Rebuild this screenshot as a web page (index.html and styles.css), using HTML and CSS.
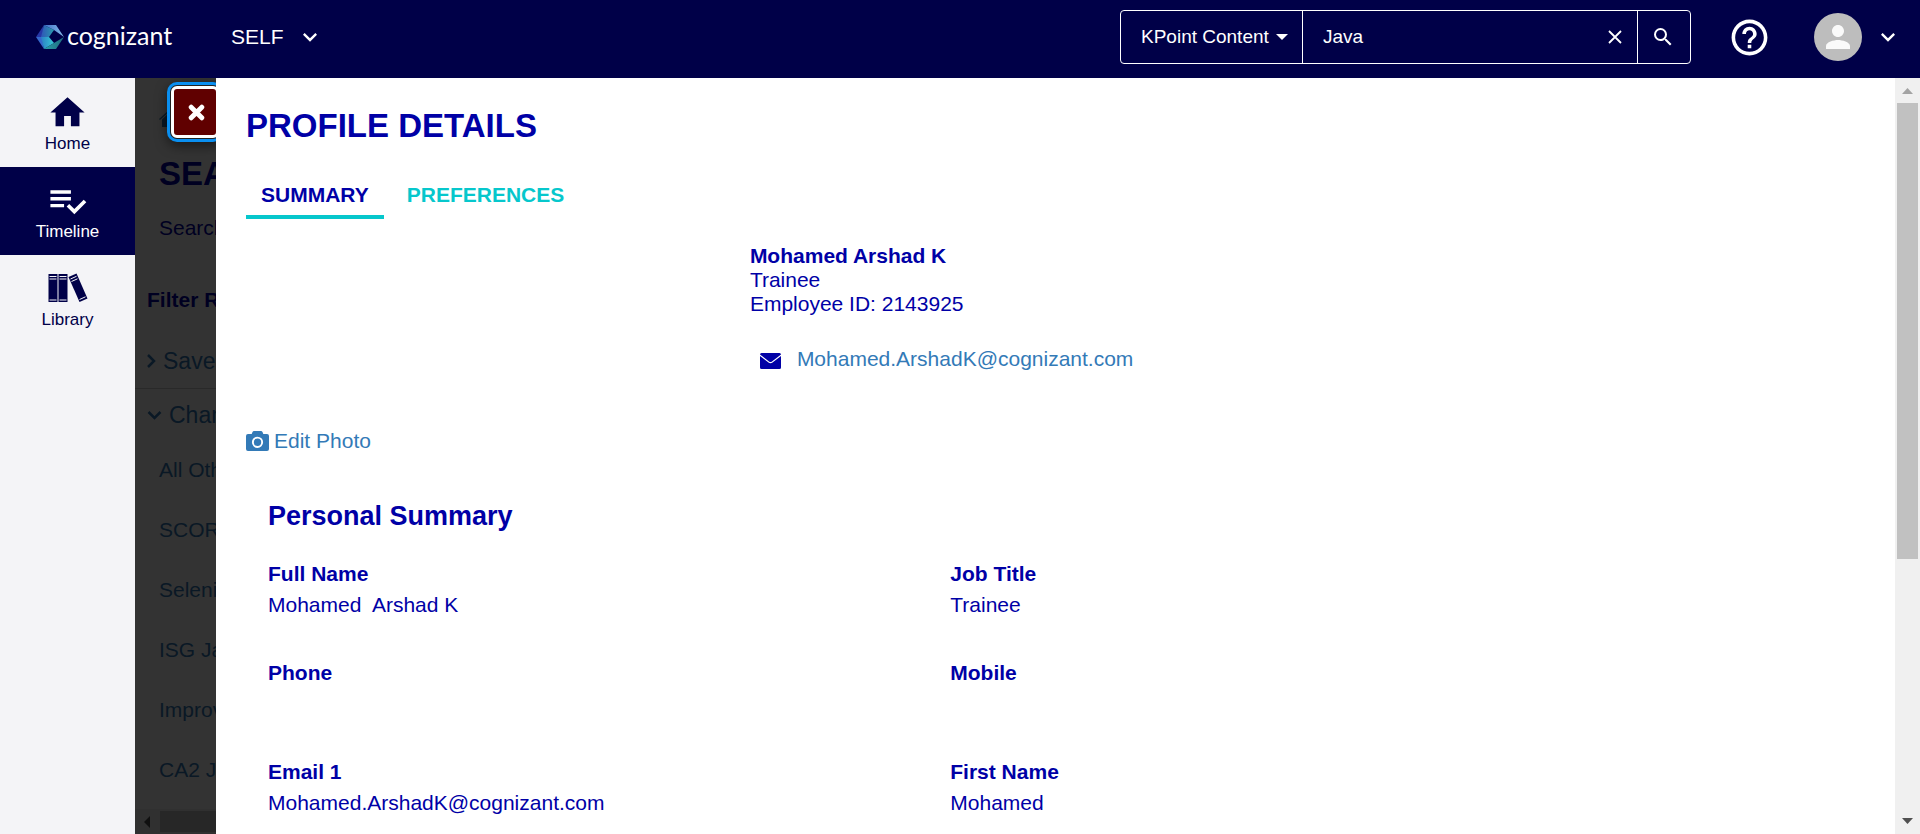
FILE: index.html
```html
<!DOCTYPE html>
<html lang="en">
<head>
<meta charset="utf-8">
<title>Profile Details</title>
<link rel="stylesheet" href="styles.css">
</head>
<body>
<div class="app">
  <header class="topbar">
    <a class="brand" href="#">
      <svg class="brand-mark" viewBox="0 0 28 24" aria-hidden="true">
        <defs>
          <linearGradient id="g1" x1="0" x2="1"><stop offset="0" stop-color="#3f6fc8"/><stop offset="1" stop-color="#85bbea"/></linearGradient>
          <linearGradient id="g2" x1="0" x2="1"><stop offset="0" stop-color="#2b7fc6"/><stop offset="1" stop-color="#38cbd4"/></linearGradient>
          <linearGradient id="g3" x1="0" x2="1"><stop offset="0" stop-color="#2f55b8"/><stop offset="1" stop-color="#2a9aae"/></linearGradient>
          <linearGradient id="g4" x1="0" x2="1"><stop offset="0" stop-color="#2aa0a8"/><stop offset="1" stop-color="#1f6a80"/></linearGradient>
        </defs>
        <path fill="url(#g1)" d="M8 0h12l8 12-10-7z"/>
        <path fill="#2636a6" d="M8 0 0 12h6z"/>
        <path fill="url(#g3)" d="M8 0l10 5-5 7H5z"/>
        <path fill="#3568cc" d="M0 12h6l2 12z"/>
        <path fill="url(#g2)" d="M5 12h8l5 6-10 6z"/>
        <path fill="url(#g4)" d="M28 12l-8 12H8l10-6z"/>
      </svg>
      <span class="brand-name">cognizant</span>
    </a>
    <button class="role" type="button">SELF
      <svg class="chev" viewBox="0 0 24 24" aria-hidden="true"><path fill="currentColor" d="M16.59 8.59 12 13.17 7.41 8.59 6 10l6 6 6-6z"/></svg>
    </button>
    <form class="search">
      <label class="scope">
        <select aria-label="Search scope"><option>KPoint Content</option></select>
        <svg class="caret" viewBox="0 0 12 6" aria-hidden="true"><path fill="currentColor" d="M0 0h12L6 6z"/></svg>
      </label>
      <div class="query">
        <input type="text" value="Java" aria-label="Search">
        <button class="clear" type="button" aria-label="Clear"><svg viewBox="0 0 14 14" aria-hidden="true"><path d="M1 1l12 12M13 1 1 13" stroke="currentColor" stroke-width="1.8"/></svg></button>
      </div>
      <button class="go" type="submit" aria-label="Run search"><svg viewBox="0 0 24 24" aria-hidden="true"><path fill="currentColor" d="M15.5 14h-.79l-.28-.27A6.47 6.47 0 0 0 16 9.5 6.5 6.5 0 1 0 9.5 16c1.61 0 3.09-.59 4.23-1.57l.27.28v.79l5 4.99L20.49 19l-4.99-5zm-6 0C7.01 14 5 11.99 5 9.5S7.01 5 9.5 5 14 7.01 14 9.5 11.99 14 9.5 14z"/></svg></button>
    </form>
    <button class="help" type="button" aria-label="Help"><svg viewBox="0 0 24 24" aria-hidden="true"><path fill="currentColor" d="M11 18h2v-2h-2v2zm1-16C6.48 2 2 6.48 2 12s4.48 10 10 10 10-4.48 10-10S17.52 2 12 2zm0 18c-4.41 0-8-3.59-8-8s3.59-8 8-8 8 3.59 8 8-3.59 8-8 8zm0-14c-2.21 0-4 1.79-4 4h2c0-1.1.9-2 2-2s2 .9 2 2c0 2-3 1.75-3 5h2c0-2.25 3-2.5 3-5 0-2.21-1.79-4-4-4z"/></svg></button>
    <button class="account" type="button" aria-label="Account">
      <span class="avatar"><svg viewBox="0 0 24 24" aria-hidden="true"><path fill="#fafafa" d="M12 12c2.21 0 4-1.79 4-4s-1.79-4-4-4-4 1.79-4 4 1.79 4 4 4zm0 2c-2.67 0-8 1.34-8 4v2h16v-2c0-2.66-5.33-4-8-4z"/></svg></span>
      <svg class="chev" viewBox="0 0 24 24" aria-hidden="true"><path fill="currentColor" d="M16.59 8.59 12 13.17 7.41 8.59 6 10l6 6 6-6z"/></svg>
    </button>
  </header>

  <div class="body">
    <nav class="rail">
      <a class="rail-item" href="#"><svg viewBox="0 0 24 24" aria-hidden="true"><path fill="currentColor" d="M10 20v-6h4v6h5v-8h3L12 3 2 12h3v8z"/></svg>Home</a>
      <a class="rail-item active" href="#"><svg viewBox="0 0 24 24" aria-hidden="true"><path fill="currentColor" d="M14 10H2v2h12v-2zm0-4H2v2h12V6zM2 16h8v-2H2v2zm19.5-4.5L23 13l-6.99 7-4.51-4.5L13 14l3.01 3 5.49-5.5z"/></svg>Timeline</a>
      <a class="rail-item" href="#"><svg viewBox="0 0 41 41" aria-hidden="true">
        <g fill="currentColor"><path d="M1.500 6h9v28h-9zM11.500 6h9v28h-9z"/><path d="M21.500 9l8-3.500 11 25-8 3.500z"/></g>
        <path fill="none" stroke="#f4f4f8" stroke-width="1" d="M2.500 8.500h7M2.500 11h7M2.500 32h7M12.500 8.500h7M12.500 11h7M12.500 32h7M23.500 11l6-2.700M24.500 13.500l6-2.700M32.500 31.500l6-2.700"/>
      </svg>Library</a>
    </nav>

    <div class="stage">
      <main class="results">
        <a class="crumb" href="#" aria-label="Home"><svg viewBox="0 0 20 17" aria-hidden="true"><path fill="currentColor" d="M10 3 3 9.500V17h5v-5h4v5h5V9.500zM10 0 0 9l1 1 9-8 9 8 1-1z"/></svg></a>
        <h1>SEARCH</h1>
        <p class="lead">Search results</p>
        <section class="filters">
          <h2>Filter Results</h2>
          <a class="group ruled" href="#"><svg viewBox="0 0 9 14" aria-hidden="true"><path fill="none" stroke="currentColor" stroke-width="2.500" d="M1 1l6 6-6 6"/></svg>Saved</a>
          <a class="group" href="#"><svg class="open" viewBox="0 0 14 9" aria-hidden="true"><path fill="none" stroke="currentColor" stroke-width="2.500" d="M1 1l6 6 6-6"/></svg>Channels</a>
          <ul>
            <li><a href="#">All Others</a></li>
            <li><a href="#">SCORM</a></li>
            <li><a href="#">Selenium</a></li>
            <li><a href="#">ISG Java</a></li>
            <li><a href="#">Improve</a></li>
            <li><a href="#">CA2 Java</a></li>
          </ul>
        </section>
        <div class="hscroll"><svg viewBox="0 0 6 12" aria-hidden="true"><path fill="#505050" d="M6 0v12L0 6z"/></svg><span></span></div>
      </main>
      <div class="shade"></div>
      <button class="close" type="button" aria-label="Close"><svg viewBox="0 0 16 16" aria-hidden="true"><path d="M3 3l10 10M13 3 3 13" stroke="#fff" stroke-width="4.600" stroke-linecap="round"/></svg></button>

      <section class="panel">
        <div class="panel-body">
          <h2 class="panel-title">PROFILE DETAILS</h2>
          <div class="tabs" role="tablist">
            <button class="tab selected" type="button" role="tab" aria-selected="true">SUMMARY</button>
            <button class="tab" type="button" role="tab" aria-selected="false">PREFERENCES</button>
          </div>
          <div class="person">
            <div class="person-info">
              <strong>Mohamed Arshad K</strong>
              <span>Trainee</span>
              <span>Employee ID: 2143925</span>
              <div class="mail">
                <svg viewBox="0 0 21 16" aria-hidden="true"><path fill="currentColor" d="M1.500 0h18A1.500 1.500 0 0 1 21 1.500L12 8.500q-1.500 1-3 0L0 1.500A1.500 1.500 0 0 1 1.500 0zM0 3l8.500 6.500q2 1.300 4 0L21 3v11.500a1.500 1.500 0 0 1-1.500 1.500h-18A1.500 1.500 0 0 1 0 14.500z"/></svg>
                <a href="#">Mohamed.ArshadK@cognizant.com</a>
              </div>
            </div>
          </div>
          <a class="edit" href="#"><svg viewBox="0 0 23 20" aria-hidden="true"><path fill="currentColor" fill-rule="evenodd" d="M8 0h7q1 0 1.500 1l.8 2H21q2 0 2 2v13q0 2-2 2H2q-2 0-2-2V5q0-2 2-2h3.700l.8-2Q7 0 8 0zm3.500 5.700a5.600 5.600 0 1 0 0 11.200 5.600 5.600 0 0 0 0-11.200zm0 1.900a3.700 3.700 0 1 1 0 7.400 3.700 3.700 0 0 1 0-7.400z"/></svg>Edit Photo</a>
          <section class="summary">
            <h3>Personal Summary</h3>
            <dl>
              <div><dt>Full Name</dt><dd>Mohamed&nbsp; Arshad K</dd></div>
              <div><dt>Job Title</dt><dd>Trainee</dd></div>
              <div><dt>Phone</dt><dd></dd></div>
              <div><dt>Mobile</dt><dd></dd></div>
              <div><dt>Email 1</dt><dd>Mohamed.ArshadK@cognizant.com</dd></div>
              <div><dt>First Name</dt><dd>Mohamed</dd></div>
            </dl>
          </section>
        </div>
        <div class="vscroll" aria-hidden="true">
          <svg viewBox="0 0 11 6"><path fill="#a3a3a3" d="M0 6h11L5.500 0z"/></svg>
          <div class="track"><div class="thumb"></div></div>
          <svg viewBox="0 0 11 6"><path fill="#505050" d="M0 0h11L5.500 6z"/></svg>
        </div>
      </section>
    </div>
  </div>
</div>
</body>
</html>
```
FILE: styles.css
```css
* { box-sizing: border-box; }
body, h1, h2, h3, p, ul, dl, dd { margin: 0; }
body {
  font: 21px/24px "Liberation Sans", Arial, sans-serif;
  color: #0000a6;
}
a { color: #337ab7; text-decoration: none; }
button, select, input {
  font: inherit;
  color: inherit;
  background: none;
  border: 0;
  padding: 0;
  margin: 0;
}
button, select { cursor: pointer; }
svg { display: block; flex: none; }

.app { height: 100vh; display: flex; flex-direction: column; overflow: hidden; }

/* top bar */
.topbar {
  flex: none;
  display: flex;
  align-items: center;
  padding: 10px 18px 14px 36px;
  background: #000048;
  color: #fff;
}
.brand { display: flex; align-items: center; gap: 3px; color: #fff; width: 195px; }
.brand-mark { width: 28px; height: 24px; }
.brand-name { font: 25px/28px Lato, sans-serif; padding-bottom: 4px; }
.role { display: flex; align-items: center; gap: 12px; }
.chev { width: 28px; height: 28px; }
.search {
  display: flex;
  width: 571px;
  height: 54px;
  margin-left: auto;
  border: 1px solid #fff;
  border-radius: 4px;
  font-size: 19px;
}
.scope { display: flex; align-items: center; flex: 0 0 182px; padding: 0 14px 0 20px; border-right: 1px solid #fff; }
.scope select { appearance: none; flex: 1; min-width: 0; }
.scope option { color: #000048; }
.caret { width: 12px; height: 6px; }
.query { display: flex; align-items: center; flex: 1; min-width: 0; padding: 0 15px 0 20px; }
.query input { flex: 1; min-width: 0; outline: 0; }
.clear svg { width: 14px; height: 14px; }
.go { flex: 0 0 53px; display: flex; align-items: center; padding-left: 13px; border-left: 1px solid #fff; }
.go svg { width: 24px; height: 24px; }
.help { margin-left: 37px; }
.help svg { width: 43px; height: 43px; }
.account { display: flex; align-items: center; gap: 12px; margin-left: 43px; }
.avatar { width: 48px; height: 48px; border-radius: 50%; background: #bdbdbd; display: grid; place-items: center; }
.avatar svg { width: 36px; height: 36px; }

/* left rail */
.body { flex: 1; min-height: 0; display: flex; }
.rail { flex: 0 0 135px; padding-top: 1px; background: #f4f4f7; }
.rail-item {
  display: flex;
  flex-direction: column;
  align-items: center;
  height: 88px;
  padding-top: 13px;
  font-size: 17px;
  line-height: 22px;
  color: #000048;
}
.rail-item svg { width: 41px; height: 41px; }
.rail-item.active { background: #000048; color: #fff; }

/* page behind the drawer */
.stage { position: relative; flex: 1; min-width: 0; overflow: hidden; }
.results { height: 100%; display: flex; flex-direction: column; }
.crumb { margin: 32px 0 0 24px; width: 20px; }
.crumb svg { width: 20px; height: 17px; }
.results h1 { margin: 27px 0 0 24px; font-size: 33px; line-height: 40px; }
.lead { margin: 22px 0 0 24px; }
.filters { flex: 1; min-height: 0; padding-top: 48px; }
.filters h2 { padding-left: 12px; font-size: 21px; line-height: 24px; }
.group { display: flex; align-items: center; gap: 7px; padding: 12px; font-size: 23px; line-height: 28px; }
.group svg { width: 9px; height: 14px; }
.group svg.open { width: 15px; height: 9px; }
.ruled { margin-top: 23px; padding-bottom: 13px; border-bottom: 1px solid #ccc; }
.filters ul { list-style: none; padding: 17px 0 0 24px; display: grid; gap: 36px; }
.hscroll { flex: none; display: flex; align-items: center; gap: 10px; height: 25px; padding-left: 9px; background: #f1f1f1; }
.hscroll svg { width: 6px; height: 12px; }
.hscroll span { flex: 1; height: 21px; background: #c1c1c1; }
.shade { position: absolute; inset: 0; background: rgba(0, 0, 0, .8); }
.close {
  position: absolute;
  top: 8px;
  left: 36px;
  width: 48px;
  height: 52px;
  padding-left: 3px;
  border: 3px solid #fff;
  border-radius: 6px;
  background: #600000;
  box-shadow: 0 0 0 1px #222, 0 0 0 4px #0a8ff0, 0 4px 12px 4px rgba(0, 0, 0, .5);
}
.close svg { width: 17px; height: 17px; margin: auto; }

/* drawer */
.panel { position: absolute; inset: 0 0 0 81px; display: flex; background: #fff; }
.panel-body { flex: 1; min-width: 0; padding: 28px 30px 0; overflow: hidden; }
.panel-title { font-size: 33px; line-height: 40px; }
.tabs { display: flex; gap: 8px; margin-top: 29px; }
.tab { padding: 8px 15px; border-bottom: 4px solid transparent; font-weight: bold; color: #06c7cc; }
.tab.selected { color: #0000a6; border-color: #06c7cc; }
.person { display: grid; grid-template-columns: 31% 1fr; column-gap: 2px; margin-top: 25px; }
.person-info { grid-column: 2; display: flex; flex-direction: column; }
.mail { display: flex; align-items: flex-end; gap: 16px; margin-top: 31px; padding-left: 10px; }
.mail svg { width: 21px; height: 16px; margin-bottom: 2px; }
.edit { display: flex; width: fit-content; align-items: center; gap: 5px; margin-top: 58px; }
.edit svg { width: 23px; height: 20px; }
.summary { margin-top: 47px; padding: 0 5px 0 22px; }
.summary h3 { font-size: 27px; line-height: 32px; }
.summary dl { display: grid; grid-template-columns: 3fr 4fr; row-gap: 44px; margin-top: 30px; }
.summary dt { font-weight: bold; }
.summary dd { min-height: 24px; margin-top: 7px; }

.vscroll { flex: 0 0 25px; display: flex; flex-direction: column; align-items: center; gap: 9px; padding: 10px 2px; background: #f0f0f0; }
.vscroll svg { width: 11px; height: 6px; }
.track { flex: 1; width: 100%; }
.thumb { height: 64.6%; background: #c1c1c1; }
```
